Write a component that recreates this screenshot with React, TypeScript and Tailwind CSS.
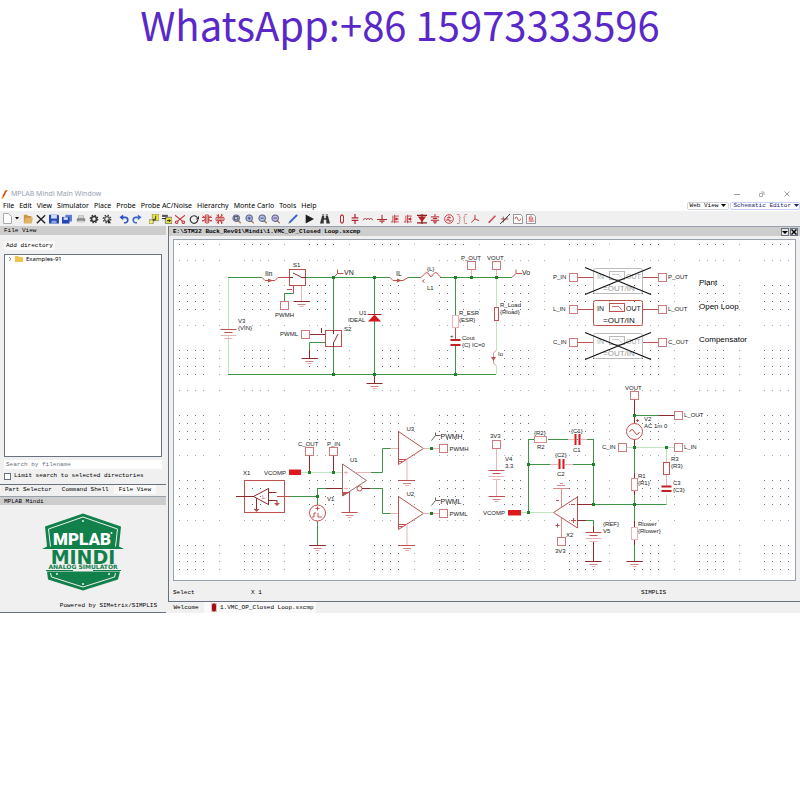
import { useState } from "react";
import type { ReactNode } from "react";

const RED = "#c0504d";
const DARK = "#8f2a2c";
const PINK = "#eab4b6";
const GREEN = "#3f9447";
const PALE = "#bfe3bf";

/* ---------- toolbar icons, all on a 12 x 12 grid ---------- */

const Zoom = ({ children }: { children?: ReactNode }) => (
  <>
    <path d="M7 7.5l3.5 3.5" stroke="#b08050" strokeWidth="1.8" />
    <circle cx="5" cy="5" r="3.8" fill="#b9c4e4" stroke="#59618a" strokeWidth="1.3" />
    {children}
  </>
);

const Mosfet = ({ flip }: { flip?: boolean }) => (
  <g fill="none" stroke="#c4282c">
    <path d="M1 9.5h2.5M3.5 2v8M5.5 1v10" />
    <path d="M5.5 2.5h5M5.5 6h5M5.5 9.5h5" />
    <path d={flip ? "M7 6l2-1.5v3z" : "M9 6l-2-1.5v3z"} fill="#c4282c" />
  </g>
);

const icons: Record<string, ReactNode> = {
  "Open": (
    <>
      <path d="M1 1h4l1 1.5h4V11H1z" fill="#c99544" />
      <path d="M3 4.5h9L10.500 11H1z" fill="#e3b36a" />
    </>
  ),
  "Close": <path d="M1 1.500l10 9.500M11 1.500L1 11" stroke="#222" strokeWidth="1.7" />,
  "Save": (
    <>
      <path d="M0 1h11l1 1v9.500H0z" fill="#2747b8" />
      <path d="M2.5 1h7v4.500h-7z" fill="#cfdcf5" />
      <path d="M3 8h6v3.500H3z" fill="#8da3dd" />
    </>
  ),
  "Save all": (
    <>
      <path d="M4 1h8v8H4z" fill="#5f80d4" />
      <path d="M0 3.5h9v8H0z" fill="#2747b8" />
      <path d="M2 4h5v3H2z" fill="#dbe5fa" />
    </>
  ),
  "Print": (
    <>
      <path d="M3 2h6v3H3z" fill="#ddd" stroke="#999" strokeWidth=".6" />
      <path d="M1 5h10v4H1z" fill="#8b8b8b" />
      <path d="M3 8h6v2.5H3z" fill="#d5d5d5" />
    </>
  ),
  "Options": (
    <>
      <circle cx="6" cy="6" r="3" fill="none" stroke="#333" strokeWidth="2" />
      <circle cx="6" cy="6" r="4.5" fill="none" stroke="#333" strokeWidth="1.5" strokeDasharray="1.800 1.734" />
    </>
  ),
  "Run options": (
    <>
      <circle cx="6" cy="6" r="2.8" fill="none" stroke="#555" strokeWidth="1.6" />
      <circle cx="6" cy="6" r="4.5" fill="none" stroke="#444" strokeWidth="1.6" strokeDasharray="1.800 1.734" />
      <path d="M7 6l4 5H7z" fill="#222" />
    </>
  ),
  "Undo": (
    <>
      <path d="M3 4h4.500a2.800 3 0 010 6.500H6" fill="none" stroke="#2f52c4" strokeWidth="2" />
      <path d="M.5 4L5 .5v7z" fill="#2f52c4" />
    </>
  ),
  "Redo": (
    <>
      <path d="M9 4H4.500a2.800 3 0 000 6.500H6" fill="none" stroke="#3f68d0" strokeWidth="2" />
      <path d="M11.500 4L7 .5v7z" fill="#3f68d0" />
    </>
  ),
  "Copy": (
    <>
      <path d="M4 0h8v8H4z" fill="#e9e34a" stroke="#77772a" strokeWidth=".7" />
      <path d="M0 7h5v5H0z" fill="#f4f06a" stroke="#555" strokeWidth=".7" />
      <path d="M8 2v5H5M6.500 5.500L5 7l1.500 1.500" stroke="#222" fill="none" />
    </>
  ),
  "Paste": (
    <>
      <path d="M0 1h7v2.500H0z" fill="#555" />
      <path d="M4 4h8v7.500H4z" fill="#e9e34a" stroke="#555" strokeWidth=".8" />
      <path d="M0 5.500h5M6 8h4M8.500 6.500L10 8 8.500 9.500" stroke="#222" strokeWidth="1.2" fill="none" />
    </>
  ),
  "Cut": (
    <g fill="none" stroke="#c9373b" strokeWidth="1.3">
      <path d="M0 1.500l9 7M12 1.500l-9 7" />
      <circle cx="2" cy="9.800" r="1.500" />
      <circle cx="10" cy="9.800" r="1.500" />
    </g>
  ),
  "Rotate": (
    <>
      <path d="M9.8 4.2A4.500 4.500 0 1010.5 7" fill="none" stroke="#333" strokeWidth="1.4" />
      <path d="M12 2v4.500H8z" fill="#333" />
    </>
  ),
  "Mirror": (
    <g fill="none" stroke="#c4282c" strokeWidth="1.1">
      <path d="M6 0v12M4 1v10M8 1v10M0 4h4M8 4h4M1 9l3-3M11 9L8 6M0 8h3M9 8h3M1 2l3 3M11 2L8 5" />
    </g>
  ),
  "Flip": (
    <g fill="none" stroke="#c4282c" strokeWidth="1.1">
      <path d="M0 6h12M1 4h10M1 8h10M4 0v4M4 8v4M9 1L6 4M9 11L6 8M8 0v3M8 9v3M2 1l3 3M2 11l3-3" />
    </g>
  ),
  "Zoom window": <Zoom><path d="M3 3h4v4H3z" fill="none" stroke="#444" /></Zoom>,
  "Zoom in": <Zoom><path d="M3 5h4M5 3v4" stroke="#2d3f86" /></Zoom>,
  "Zoom out": <Zoom><path d="M3 5h4" stroke="#2d3f86" /></Zoom>,
  "Zoom fit": <Zoom><path d="M3 5h4" stroke="#a0439a" strokeWidth="1.5" /></Zoom>,
  "Wire": (
    <>
      <path d="M2 10l9-9" stroke="#3a62cf" strokeWidth="2.4" />
      <path d="M0 12l1.500-3 1.500 1.500z" fill="#777" />
    </>
  ),
  "Run": <path d="M2 .5L12 6 2 11.500z" fill="#1f1f1f" />,
  "Find": (
    <>
      <path d="M2.5 2H5v3h2V2h2.500L12 11.500H7.500V7h-3v4.500H0z" fill="#333" />
      <path d="M2.500 1H5M7 1h2.500" stroke="#333" />
    </>
  ),
  "Resistor": <path d="M6 0v2M6 10v2M4.200 2h3.600v8H4.200z" fill="#fff" stroke="#c4282c" strokeWidth="1.2" />,
  "Capacitor": <path d="M6 0v4M6 8v4M2 4.7h8M2 7.5h8" stroke="#b0282c" strokeWidth="1.5" />,
  "Inductor": (
    <path d="M0 7h1a1.700 1.700 0 013.400 0 1.700 1.700 0 013.400 0 1.700 1.700 0 013.400 0h1" fill="none" stroke="#a5383b" />
  ),
  "Ground": <path d="M6 1v5M0 6.500h12M3 8.500h6M5 10.500h2" stroke="#b0282c" strokeWidth="1.3" />,
  "NMOS": <Mosfet />,
  "PMOS": <Mosfet flip />,
  "Diode": (
    <>
      <path d="M0 1.500h12M0 10.500h12M6 0v12" stroke="#8f1c20" strokeWidth="1.5" />
      <path d="M1 3h10L6 9.500z" fill="#b41f24" />
    </>
  ),
  "Power supply": <path d="M6 0v3M6 9v3M1 3.5h10M3.5 5.5h5M1 7.5h10M3.5 9.5h5" stroke="#b41f24" strokeWidth="1.2" />,
  "Source": (
    <g fill="none" stroke="#c4282c">
      <circle cx="6" cy="6" r="5.2" />
      <path d="M3.5 4.5h5M6 2v3M3.5 8.500V6.5H6v2h2.5V7" />
    </g>
  ),
  "Transformer": (
    <path d="M0 .5h2.500V3L4 4 2.500 5.200 4 6.400 2.500 7.600 4 8.800 2.500 10v1.500H0M12 .5H9.500V3L8 4l1.500 1.200L8 6.400l1.500 1.200L8 8.800 9.500 10v1.500H12" fill="none" stroke="#b85558" strokeDasharray="1.500 .6" />
  ),
  "Terminal": <path d="M6 1v5M6 6l-4.500 4M6 6l5 2" stroke="#b0282c" fill="none" strokeWidth="1.1" />,
  "Voltage probe": (
    <>
      <path d="M2 10.5L10 2" stroke="#c4393d" strokeWidth="1.8" />
      <path d="M4 7.5L9 2" stroke="#f0b8ba" strokeWidth=".7" />
    </>
  ),
  "Differential probe": (
    <>
      <path d="M0 12L12 0" stroke="#444" strokeWidth="1.2" />
      <path d="M3 10l6-6M1 6h9M4 3v7" stroke="#8c4a4c" />
    </>
  ),
  "Plot": (
    <>
      <path d="M.5.5h8.500l2.500 2.500v8.500H.5z" fill="#fff" stroke="#777" />
      <path d="M2.5 6c1.200-4 2.200-3 3.200 0s2.300 3 3.800-.5" fill="none" stroke="#c4282c" />
    </>
  ),
  "Bode plot": (
    <>
      <path d="M.5.5h8.500l2.500 2.500v8.500H.5z" fill="#fff" stroke="#777" />
      <path d="M6 2v6M4 3v4M8 4v3M3 8.5h7" stroke="#c4282c" />
    </>
  ),
};

const toolGroups = [
  { width: "w-[27px]", tools: ["Undo", "Redo"] },
  { width: "w-[80px]", tools: ["Copy", "Paste", "Cut", "Rotate", "Mirror", "Flip"] },
  { width: "w-[53px]", tools: ["Zoom window", "Zoom in", "Zoom out", "Zoom fit"] },
  { width: "w-[13px]", tools: ["Wire"] },
  { width: "w-[13px]", tools: ["Run"] },
  { width: "w-[14px]", tools: ["Find"] },
  {
    width: "w-[147px]",
    tools: ["Resistor", "Capacitor", "Inductor", "Ground", "NMOS", "PMOS", "Diode", "Power supply", "Source", "Transformer", "Terminal"],
  },
  { width: "w-[53px]", tools: ["Voltage probe", "Differential probe", "Plot", "Bode plot"] },
];

const ToolGroup = ({ width, tools }: { width: string; tools: string[] }) => (
  <div className={`flex justify-around ${width}`}>
    {tools.map((tool) => (
      <button key={tool} type="button" aria-label={tool}>
        <svg className="block h-[10px] w-[10px]" viewBox="0 0 12 12">
          {icons[tool]}
        </svg>
      </button>
    ))}
  </div>
);

/* ---------- schematic parts ---------- */

type Point = { x: number; y: number };

const Wire = ({ d, c = GREEN }: { d: string; c?: string }) => (
  <path d={d} fill="none" stroke={c} />
);

const Dot = ({ x, y }: Point) => (
  <rect x={x - 1.5} y={y - 1.5} width="3" height="3" fill="#1f7f2a" />
);

const Label = ({ x, y, children, size = 6, fill = "#222" }: Point & { children: ReactNode; size?: number; fill?: string }) => (
  <text x={x} y={y} fontSize={size} fill={fill}>
    {children}
  </text>
);

const Port = ({ x, y }: Point) => (
  <rect x={x - 4} y={y - 4} width="8" height="8" fill="#fff" stroke="#d0787a" />
);

const Ground = ({ x, y, c = DARK }: Point & { c?: string }) => (
  <>
    <path d={`M${x - 8} ${y}h16`} stroke={c} />
    <path d={`M${x - 4} ${y + 3}h8`} stroke={RED} opacity=".7" />
    <path d={`M${x - 2} ${y + 5}h4`} stroke={PINK} />
  </>
);

const Battery = ({ x, y }: Point) => (
  <>
    <path d={`M${x - 8} ${y}h16M${x - 4} ${y + 3}h8`} stroke={RED} />
    <path d={`M${x - 8} ${y + 6}h16M${x - 4} ${y + 9}h8`} stroke={PINK} />
  </>
);

const Resistor = ({ x, y, c = "#d98a8c" }: Point & { c?: string }) => (
  <rect x={x - 3} y={y} width="6" height="12" fill="#fff" stroke={c} />
);

const Buffer = ({ x, y, name, net }: Point & { name: string; net: string }) => (
  <>
    <path d={`M${x} ${y - 17}v33l25-16z`} fill="none" stroke={RED} />
    <path d={`M${x} ${y + 11}h8M${x} ${y + 13}h4`} stroke={RED} />
    <Wire d={`M${x + 8.5} ${y + 11}v21`} c={PINK} />
    <Ground x={x + 8.5} y={y + 32} c={RED} />
    <Wire d={`M${x + 25} ${y}h17`} c={PINK} />
    <Wire d={`M${x + 33} ${y - 8}l4-5v-3M${x + 37} ${y - 13}h5`} c="#666" />
    <Dot x={x + 33} y={y} />
    <Port x={x + 45} y={y} />
    <Label x={x + 8} y={y - 18}>{name}</Label>
    <Label x={x + 42} y={y - 10} size={7}>{net}</Label>
    <Label x={x + 51} y={y + 2}>{net}</Label>
  </>
);

const Transfer = ({ y, from, to, disabled }: { y: number; from: string; to: string; disabled?: boolean }) => (
  <>
    <Wire d={`M577.5 ${y}h16M642.5 ${y}h16`} c={RED} />
    <Port x={573.5} y={y} />
    <Port x={662.5} y={y} />
    <Label x={553} y={y + 1}>{from}</Label>
    <Label x={668} y={y + 1}>{to}</Label>
    <rect x="593.5" y={y - 9} width="49" height="25" rx="2" fill="none" stroke={disabled ? "#bbb" : RED} />
    <rect x="609.5" y={y - 6} width="15" height="8" fill="none" stroke={disabled ? "#bbb" : RED} />
    <path d={`M612 ${y - 3}h7l3 4`} fill="none" stroke={disabled ? "#bbb" : RED} strokeWidth=".8" />
    <Label x={597} y={y + 1} size={7} fill={disabled ? "#aaa" : "#222"}>IN</Label>
    <Label x={626} y={y + 1} size={7} fill={disabled ? "#aaa" : "#222"}>OUT</Label>
    <Label x={603} y={y + 13} size={8} fill={disabled ? "#999" : "#111"}>=OUT/IN</Label>
    {disabled && <path d={`M585 ${y - 10}l66 27M651 ${y - 10}l-66 27`} stroke="#111" strokeWidth="1.2" />}
  </>
);

const PowerStage = () => (
  <>
    {/* input source */}
    <Wire d="M228.5 277.5v52M228.5 335v39" c={PALE} />
    <Battery x={228.5} y={329.5} />
    <Label x={238} y={323}>V3</Label>
    <Label x={238} y={330}>{"{VIN}"}</Label>
    <Wire d="M228 277.5h34M306 277.5h84M408 277.5h13M440 277.5h72" />
    <Wire d="M228 374.5h268" />
    <Wire d="M262 277.5l3 3h10l3-3h11" c={RED} />
    <path d="M268 278.5l5 2-5 2z" fill={RED} />
    <Label x={265} y={276} size={7}>Iin</Label>

    {/* high side switch */}
    <rect x="289.5" y="269.5" width="16" height="16" fill="none" stroke={RED} />
    <Wire d="M289 277.5h4M293 273l8 4M301 277.5h5" c={DARK} />
    <Label x={293} y={267}>S1</Label>
    <Wire d="M293.5 285.5v8M287 289.5h5" c={RED} />
    <Wire d="M293.5 293.5h-9v8" />
    <Port x={284.5} y={305.5} />
    <Label x={275} y={317}>PWMH</Label>
    <Wire d="M301.5 286v15" c={PINK} />
    <Ground x={301.5} y={301.5} />
    <Wire d="M333.5 277.5l4-4v-4M337.5 273.5h6" c={RED} />
    <Label x={344} y={275} size={7}>VN</Label>

    {/* low side switch */}
    <Wire d="M333.5 277.5v53M333.5 346.5v28" />
    <rect x="325.5" y="330.5" width="16" height="16" fill="none" stroke={RED} />
    <Wire d="M333.5 330v4M333.5 342v5M334 342l4-8" c={DARK} />
    <Wire d="M309 334.5h16M321.5 328v5" c={DARK} />
    <Port x={305.5} y={334.5} />
    <Label x={344} y={331}>S2</Label>
    <Label x={280} y={336}>PWML</Label>
    <Wire d="M325 342.5h-15.5v8" />
    <Wire d="M309.5 350v8" c={DARK} />
    <Ground x={309.5} y={358.5} />

    {/* diode */}
    <Wire d="M374.5 277.5v97" />
    <path d="M368 321.5h13l-6.5-7z" fill="#d3191c" />
    <path d="M367.5 314.5h14" stroke="#b41f24" />
    <Label x={359} y={315}>U1</Label>
    <Label x={348} y={322}>IDEAL</Label>
    <Wire d="M374.5 374.5v9" c={DARK} />
    <Ground x={374.5} y={383.5} />

    {/* output filter */}
    <Wire d="M390 277.5l3 3h10l5-3" c={RED} />
    <path d="M397 278.5l5 2-5 2z" fill={RED} />
    <Label x={396} y={276} size={7}>IL</Label>
    <Wire d="M421 277.5l3-3q3-4 5 0q2 4 4 0q3-4 5 0l3 3" c={RED} />
    <Label x={427} y={271}>{"{L}"}</Label>
    <Label x={427} y={290}>L1</Label>
    <Wire d="M424.5 279.5l-2 1.5 2 1.5" c={RED} />
    <Wire d="M471.5 269v8M496.5 269v8" c={PINK} />
    <Port x={471.5} y={265.5} />
    <Port x={496.5} y={265.5} />
    <Label x={461} y={260}>P_OUT</Label>
    <Label x={487} y={260}>VOUT</Label>
    <Wire d="M512 277.5l4-4v-4M516 273.5h6" c={RED} />
    <Label x={522} y={275} size={7}>Vo</Label>

    <Wire d="M455.5 277.5v38M455.5 346v28" />
    <Wire d="M455.5 328v11" c={RED} />
    <Resistor x={455.5} y={315.5} c={PINK} />
    <path d="M450.5 340h10M450.5 345h10" stroke="#c02226" strokeWidth="2" />
    <Label x={450} y={338}>+</Label>
    <Label x={459} y={315}>R_ESR</Label>
    <Label x={459} y={322}>{"{ESR}"}</Label>
    <Label x={462} y={340}>Cout</Label>
    <Label x={462} y={347}>{"{C} IC=0"}</Label>

    <Wire d="M496.5 278v30M496.5 320v30M496.5 366v8" c={PALE} />
    <rect x="494.5" y="307.5" width="4" height="13" fill="#fff" stroke={RED} />
    <Wire d="M496.5 350l-3 3v10l3 3" c="#e39496" />
    <path d="M491 357h5l-2.5 4z" fill={RED} />
    <Label x={500} y={307}>R_Load</Label>
    <Label x={500} y={314}>{"{Rload}"}</Label>
    <Label x={498} y={356}>Io</Label>

    <Dot x={333.5} y={277.5} />
    <Dot x={374.5} y={277.5} />
    <Dot x={455.5} y={277.5} />
    <Dot x={471.5} y={277.5} />
    <Dot x={496.5} y={277.5} />
    <Dot x={333.5} y={374.5} />
    <Dot x={374.5} y={374.5} />
    <Dot x={455.5} y={374.5} />
  </>
);

const Modulator = () => (
  <>
    <rect x="244.5" y="480.5" width="40" height="32" fill="none" stroke={RED} />
    <Label x={243} y={475}>X1</Label>
    <Wire d="M236 496.5h18M268.5 488.5v16l-15-8zM268.5 492.5h8M268.5 500.5h8.5v3M256.5 498v12" c={DARK} />
    <path d="M253.5 509h6l-3 3zM274 503h6l-3 3z" fill={RED} />
    <Label x={262} y={499} fill={RED}>L</Label>
    <Wire d="M277 496.5h13" c={RED} />
    <Wire d="M290 496.5h27.5v-8h9M317.5 497v8M317.5 521v24" />
    <Wire d="M326 488.5h16" c={DARK} />
    <circle cx="317.5" cy="513" r="8" fill="#fff" stroke={RED} />
    <Wire d="M315.5 508.5h4M317.5 506.5v4M312 517h2v-4h2M318 513v4h4" c={RED} />
    <Label x={327} y={501}>V1</Label>
    <Ground x={317.5} y={545.5} />

    <rect x="289" y="469.5" width="12" height="5.5" fill="#dc1a1d" />
    <Label x={264} y={475}>VCOMP</Label>
    <Wire d="M301 472.5h41" c={PALE} />
    <Wire d="M309.5 456v16M333.5 456v16" c={DARK} />
    <Port x={309.5} y={451.5} />
    <Port x={333.5} y={451.5} />
    <Label x={298} y={446}>C_OUT</Label>
    <Label x={327} y={446}>P_IN</Label>
    <Dot x={309.5} y={472.5} />
    <Dot x={333.5} y={472.5} />
    <Dot x={317.5} y={496.5} />

    {/* comparator */}
    <path d="M342.5 464v32l24-15.5z" fill="none" stroke="#9b6668" />
    <path d="M342.5 492h8l-8 4z" fill={RED} />
    <Wire d="M344 472.5h4M346 470.5v4M344 488.5h4" c={PINK} />
    <circle cx="359.5" cy="488.5" r="2.5" fill="#fff" stroke={RED} />
    <Label x={350} y={462}>U1</Label>
    <Wire d="M349.5 492v20" c={RED} />
    <Ground x={349.5} y={512.5} c={RED} />
    <Wire d="M355 472.5h16M390 448.5h8M390 513.5h8" c={PINK} />
    <Wire d="M362 488.5h8" c={DARK} />
    <Wire d="M371 472.5h11.5v-24h8M370 488.5h12.5v25h8" />
    <Buffer x={398.5} y={448.5} name="U3" net="PWMH" />
    <Buffer x={398.5} y={513.5} name="U2" net="PWML" />
  </>
);

const Compensator = () => (
  <>
    {/* 3V3 rail */}
    <Wire d="M496.5 449v21M496.5 480v16" c={PINK} />
    <Port x={496.5} y={444.5} />
    <Battery x={496.5} y={470.5} />
    <Ground x={496.5} y={496.5} c={RED} />
    <Label x={490} y={438}>3V3</Label>
    <Label x={505} y={461}>V4</Label>
    <Label x={505} y={468}>3.3</Label>

    {/* feedback network */}
    <rect x="508" y="510" width="13" height="5.5" fill="#dc1a1d" />
    <Label x={483} y={515}>VCOMP</Label>
    <Wire d="M521 512.5h32" c={PALE} />
    <Wire d="M534 439.5h-5.5v73M548 439.5h25M581 439.5h12.5v65" />
    <Wire d="M528.5 464.5h28M565 464.5h28" />
    <Wire d="M550 464.5h8M565 464.5h8M568 439.5h6M581 439.5h6" c={PINK} />
    <rect x="534.5" y="436.5" width="12" height="6" fill="#fff" stroke="#d98a8c" />
    <path d="M575.5 434v11M579.5 434v11M559.5 459v10M563.5 459v10" stroke="#d3191c" strokeWidth="2" />
    <Label x={534} y={435}>{"{R2}"}</Label>
    <Label x={537} y={449}>R2</Label>
    <Label x={571} y={433}>{"{C1}"}</Label>
    <Label x={573} y={452}>C1</Label>
    <Label x={555} y={457}>{"{C2}"}</Label>
    <Label x={557} y={476}>C2</Label>

    {/* error amplifier */}
    <path d="M553.5 512.5l24-15.5v31z" fill="none" stroke={RED} />
    <Wire d="M553 488.5h16M557 485.5h8M560 483.5h3M561.5 489v18M561.5 518v20" c="#d98a8c" />
    <Wire d="M571 504.5h4M571 520.5h5M573.5 518v5M556 500.5h3M555.5 525.5h4M557.5 523.5v4" c={RED} />
    <Port x={561.5} y={541.5} />
    <Label x={566} y={537}>X2</Label>
    <Label x={555} y={553}>3V3</Label>
    <Wire d="M577 504.5h16M577 520.5h9M593.5 526v7M593.5 542v19" c={DARK} />
    <Wire d="M593 504.5h73.5M586 520.5h7.5v6" />
    <Battery x={593.5} y={532.5} />
    <Ground x={593.5} y={561.5} />
    <Label x={603} y={526}>{"{REF}"}</Label>
    <Label x={603} y={533}>V5</Label>

    {/* injection source and divider */}
    <Wire d="M634.5 399v24M634.5 440v8M655 415.5h20" c={DARK} />
    <Wire d="M634.5 415.5h24M634.5 447.5v31M634.5 490v71" />
    <Wire d="M627 447.5h48M666.5 448v12M666.5 495v9" c={PALE} />
    <Wire d="M634.5 521v6M634.5 540v5M634.5 473v6M634.5 490v5" c={DARK} />
    <Port x={634.5} y={395.5} />
    <Port x={678.5} y={415.5} />
    <Port x={678.5} y={447.5} />
    <Port x={622.5} y={447.5} />
    <circle cx="634.5" cy="431.5" r="8" fill="#fff" stroke={RED} />
    <path d="M629.5 432q2.500-5 5 0t5 0" fill="none" stroke={RED} />
    <path d="M636 420.5h3M637.5 419v3" stroke={RED} />
    <Label x={625} y={390}>VOUT</Label>
    <Label x={684} y={417}>L_OUT</Label>
    <Label x={684} y={449}>L_IN</Label>
    <Label x={602} y={449}>C_IN</Label>
    <Label x={644} y={421}>V2</Label>
    <Label x={644} y={428}>AC 1m 0</Label>
    <Resistor x={634.5} y={478.5} />
    <Resistor x={634.5} y={527.5} c={PINK} />
    <Label x={638} y={478}>R1</Label>
    <Label x={638} y={485}>{"{R1}"}</Label>
    <Label x={638} y={526}>Rlower</Label>
    <Label x={638} y={533}>{"{Rlower}"}</Label>
    <Ground x={634.5} y={561.5} />

    <Wire d="M666.5 460v26" c={PINK} />
    <Resistor x={666.5} y={462.5} c={RED} />
    <path d="M661.5 486.5h10M661.5 491h10" stroke="#c02226" strokeWidth="2" />
    <Label x={671} y={461}>R3</Label>
    <Label x={671} y={468}>{"{R3}"}</Label>
    <Label x={673} y={485}>C3</Label>
    <Label x={673} y={492}>{"{C3}"}</Label>

    <Dot x={528.5} y={464.5} />
    <Dot x={528.5} y={512.5} />
    <Dot x={593.5} y={464.5} />
    <Dot x={593.5} y={504.5} />
    <Dot x={634.5} y={415.5} />
    <Dot x={634.5} y={447.5} />
    <Dot x={634.5} y={504.5} />
    <Dot x={666.5} y={447.5} />
  </>
);

// grid points that fall on each 65px tile
const gridSteps = [0, 8, 16, 24, 40];

const Schematic = () => (
  <svg className="block h-auto w-full" viewBox="174 240 621 340" fontFamily="Liberation Sans, Arial, sans-serif">
    <defs>
      <pattern id="grid" x="179" y="480" width="65" height="65" patternUnits="userSpaceOnUse">
        {gridSteps.map((y) =>
          gridSteps.map((x) => (
            <rect key={`${x}-${y}`} x={x} y={y} width="1" height="1" fill={x === 40 || y === 40 ? "#aaa" : "#666"} />
          ))
        )}
      </pattern>
    </defs>
    <rect x="174" y="240" width="621" height="340" fill="#fff" />
    <rect x="177" y="243" width="616" height="336" fill="url(#grid)" />
    <PowerStage />
    <Transfer y={277.5} from="P_IN" to="P_OUT" disabled />
    <Transfer y={309.5} from="L_IN" to="L_OUT" />
    <Transfer y={342.5} from="C_IN" to="C_OUT" disabled />
    <Label x={699} y={285} size={8} fill="#000">Plant</Label>
    <Label x={699} y={309} size={8} fill="#000">Open Loop</Label>
    <Label x={699} y={342} size={8} fill="#000">Compensator</Label>
    <Modulator />
    <Compensator />
  </svg>
);

const Logo = () => (
  <svg className="h-[78px] w-[82px]" viewBox="42 513 82 78">
    <g fill="#11804a">
      <path d="M83 513.500l38 13-2 20 5 2.500H42l5-2.500-2-20z" />
      <path d="M47 571.500h73l-2 8-35 11-35-11z" />
      <path d="M46 570h27v1H46zM93 570h28v1H93z" />
    </g>
    <path d="M83 517l34.500 12-2 17.500M83 517l-34.500 12 2 17.500M50.500 573l1 4L83 587l31.500-10 1-4" fill="none" stroke="#f0f0f0" />
    <circle cx="83" cy="521" r="1" fill="#f0f0f0" />
    <circle cx="83" cy="584" r="1" fill="#f0f0f0" />
    <circle cx="57" cy="574" r="1" fill="#f0f0f0" />
    <circle cx="109" cy="574" r="1" fill="#f0f0f0" />
    <text x="82" y="545" textAnchor="middle" fontFamily="Roboto, sans-serif" fontWeight="900" fontSize="17" fill="#fff">
      MPLAB
    </text>
    <circle cx="111.500" cy="533" r="1" fill="#fff" />
    <text x="83" y="564" textAnchor="middle" fontFamily="DejaVu Sans, sans-serif" fontWeight="700" fontSize="19" fill="#11804a">
      MINDI
    </text>
    <text x="83" y="569" textAnchor="middle" fontFamily="DejaVu Sans, sans-serif" fontWeight="700" fontSize="6" fill="#11804a">
      ANALOG SIMULATOR
    </text>
  </svg>
);

const menus = ["File", "Edit", "View", "Simulator", "Place", "Probe", "Probe AC/Noise", "Hierarchy", "Monte Carlo", "Tools", "Help"];
const sideTabs = ["Part Selector", "Command Shell", "File View"];

const App = () => {
  const [search, setSearch] = useState("");
  const [limit, setLimit] = useState(false);

  return (
    <div className="min-h-screen bg-white font-['Liberation_Mono',monospace] text-[6px] leading-[8px] text-black">
      <h1 className="h-[188px] text-center font-['Noto_Sans_CJK_SC','Noto_Sans',sans-serif] text-[40px] leading-[48px] text-[#5a28c8]">
        WhatsApp:+86 15973333596
      </h1>

      <header className="font-['Noto_Sans',sans-serif]">
        <div className="flex h-3 items-center pr-[10px] text-[7px] text-gray-400">
          <svg className="mr-[3px] ml-px h-[9px] w-[7px]" viewBox="0 0 7 9">
            <path d="M6.5 0C3 1 5 3 3 5L1 8.5" fill="none" stroke="#e8a11c" strokeWidth="1.6" />
            <path d="M5.5 1C3 2 4 4 2 6.5" fill="none" stroke="#c9302c" strokeWidth="1.2" />
          </svg>
          <span className="grow">MPLAB Mindi Main Window</span>
          <div className="flex items-center gap-[19px]">
            <button type="button" aria-label="Minimize">
              <svg className="block h-[6px] w-[6px]" viewBox="0 0 6 6"><path d="M0 3.5h6" stroke="#999" /></svg>
            </button>
            <button type="button" aria-label="Restore">
              <svg className="block h-[6px] w-[6px]" viewBox="0 0 6 6"><path d="M.5 2.5h3v3h-3zM2 1h3v3" fill="none" stroke="#999" strokeWidth=".8" /></svg>
            </button>
            <button type="button" aria-label="Close window">
              <svg className="block h-[6px] w-[6px]" viewBox="0 0 6 6"><path d="M.5.5l5 5M5.5.5l-5 5" stroke="#888" strokeWidth=".8" /></svg>
            </button>
          </div>
        </div>

        <div className="flex h-[11px] items-center pl-[3px]">
          <nav className="flex grow gap-[5px] text-[7px]">
            {menus.map((menu) => (
              <button key={menu} type="button">{menu}</button>
            ))}
          </nav>
          <div className="flex gap-px font-['Liberation_Mono',monospace]">
            <button type="button" className="flex h-2 items-center gap-[3px] rounded-xs border border-gray-300 px-[2px]">
              Web View
              <svg className="h-1 w-[5px]" viewBox="0 0 5 4"><path d="M0 0h5L2.500 3z" /></svg>
            </button>
            <button type="button" className="flex h-2 items-center gap-[3px] rounded-xs border border-indigo-200 pl-[2px] text-[#26266e]">
              Schematic Editor
              <svg className="h-1 w-[5px]" viewBox="0 0 5 4"><path d="M0 0h5L2.500 3z" fill="#26266e" /></svg>
            </button>
          </div>
        </div>

        <div className="flex h-[15px] items-center gap-[3px] bg-[#f0f0f0] pl-[3px]">
          <div className="flex items-center">
            <button type="button" aria-label="New" className="flex w-[18px] items-center gap-[3px]">
              <svg className="h-[11px] w-[9px]" viewBox="0 0 9 11">
                <path d="M.5.5h5l3 3v7h-8z" fill="#fff" stroke="#aaa" />
              </svg>
              <svg className="h-[3px] w-1" viewBox="0 0 4 3"><path d="M0 0h4L2 2.500z" /></svg>
            </button>
            <ToolGroup width="w-[93px]" tools={["Open", "Close", "Save", "Save all", "Print", "Options", "Run options"]} />
          </div>
          {toolGroups.map((group) => (
            <ToolGroup key={group.tools[0]} width={group.width} tools={group.tools} />
          ))}
        </div>
      </header>

      <div className="flex gap-[2px] bg-[#f0f0f0]">
        <aside className="flex w-[166px] shrink-0 flex-col border-b border-gray-500">
          <h2 className="h-[9px] bg-[#cdcdcd] pl-1 leading-[10px]">File View</h2>
          <button type="button" className="mt-[6px] ml-1 h-[9px] self-start rounded-xs bg-[#fafafa] px-[2px]">
            Add directory
          </button>
          <div className="mt-1 mr-1 ml-1 min-h-[203px] grow border border-gray-500 bg-white">
            <button type="button" className="flex items-center gap-[3px] pl-1">
              <svg className="h-1 w-[3px]" viewBox="0 0 3 4"><path d="M0 0l2 2-2 2" fill="none" stroke="#777" strokeWidth=".8" /></svg>
              <svg className="h-[6px] w-2" viewBox="0 0 8 6"><path d="M0 0h3l1 1h4v5H0z" fill="#f0c24e" /></svg>
              <span className="font-['Noto_Sans',sans-serif]">Examples-91</span>
            </button>
          </div>
          <input
            type="text"
            aria-label="Search by filename"
            placeholder="Search by filename"
            value={search}
            onChange={(e) => setSearch(e.target.value)}
            className="mx-1 mt-[3px] h-[9px] bg-white px-[2px] placeholder:text-gray-500"
          />
          <label className="mt-[3px] ml-1 flex h-2 items-center gap-[3px]">
            <input
              type="checkbox"
              checked={limit}
              onChange={(e) => setLimit(e.target.checked)}
              className="h-[7px] w-[7px] appearance-none border border-gray-500 bg-white checked:bg-gray-600"
            />
            Limit search to selected directories
          </label>
          <div className="mt-1 flex h-[10px] border-t border-gray-500">
            {sideTabs.map((tab) => (
              <button
                key={tab}
                type="button"
                className={tab === "File View" ? "bg-[#fafafa] px-[5px]" : "px-[5px]"}
              >
                {tab}
              </button>
            ))}
          </div>
          <h2 className="mt-[2px] h-[9px] border-t border-gray-400 bg-[#cdcdcd] pl-1 leading-[10px]">MPLAB Mindi</h2>
          <div className="flex flex-col items-center pt-2">
            <Logo />
            <p className="mt-[11px] mb-[2px] self-end pr-[9px]">Powered by SIMetrix/SIMPLIS</p>
          </div>
        </aside>

        <main className="min-w-0 grow">
          <div className="border-b border-l border-gray-500">
            <div className="flex h-[10px] items-center border-t border-gray-400 bg-[#cdcdcd] pr-[2px] pl-1">
              <h2 className="grow font-bold">E:\STM32 Buck_Rev01\Mindi\1.VMC_OP_Closed Loop.sxcmp</h2>
              <button type="button" aria-label="Window list" className="mr-px border border-gray-500 bg-[#e4e4e4]">
                <svg className="block h-[6px] w-[6px]" viewBox="0 0 6 6"><path d="M0 2h6L3 5z" /></svg>
              </button>
              <button type="button" aria-label="Close schematic" className="border border-gray-500 bg-[#e4e4e4]">
                <svg className="block h-[6px] w-[6px]" viewBox="0 0 6 6"><path d="M.5.5l5 5M5.5.5l-5 5" stroke="#000" strokeWidth="1.5" /></svg>
              </button>
            </div>
            <div className="mx-1 mt-[3px] border border-gray-400">
              <Schematic />
            </div>
            <div className="flex h-5 items-center pt-[3px] pl-1">
              <span className="w-[78px]">Select</span>
              <span className="w-[390px]">X 1</span>
              <span>SIMPLIS</span>
            </div>
          </div>
          <div className="flex h-[11px] items-stretch">
            <button type="button" className="w-9">Welcome</button>
            <button type="button" className="flex items-center gap-[3px] bg-[#fafafa] pr-[2px] pl-[7px]">
              <svg className="h-[9px] w-[6px]" viewBox="0 0 6 9">
                <path d="M0 0h6v9H0z" fill="#e6bfc0" />
                <path d="M1.5 1.5h3v6h-3zM3 0v9" fill="#9c1518" stroke="#9c1518" />
              </svg>
              1.VMC_OP_Closed Loop.sxcmp
            </button>
          </div>
        </main>
      </div>
    </div>
  );
};

export default App;
